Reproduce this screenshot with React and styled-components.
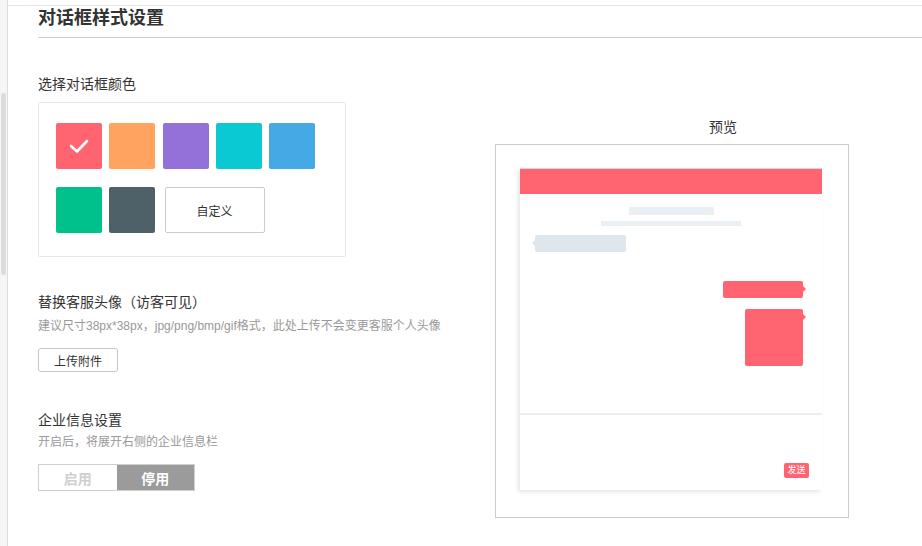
import styled, { createGlobalStyle } from 'styled-components'

const GlobalStyle = createGlobalStyle`
  html, body {
    margin: 0;
    padding: 0;
    background: #fff;
  }
  body {
    font-family: 'Liberation Sans', 'Noto Sans CJK SC', sans-serif;
    color: #333;
  }
`

const THEME_COLORS = ['#ff6470', '#ffa35f', '#9470d9', '#0bc9d3', '#44a9e5', '#00c18b', '#4f6168']

const Page = styled('div')`
  display: flex;
  width: 922px;
  height: 546px;
  overflow: hidden;
`

const Rail = styled('div')`
  flex: 0 0 7px;
  background: #f6f6f6;
  border-right: 1px solid #dcdcdc;
  padding-top: 93px;
`

const RailThumb = styled('div')`
  width: 5px;
  height: 182px;
  margin-left: 1px;
  border-radius: 2px;
  background: #dcdcdc;
`

const Main = styled('main')`
  flex: 1;
  margin-top: 5px;
  border-top: 1px solid #e4e4e4;
  padding-left: 30px;
`

const Title = styled('h1')`
  margin: 0;
  padding-bottom: 7px;
  border-bottom: 1px solid #cfcfcf;
  font-size: 18px;
  line-height: 24px;
  font-weight: 700;
  color: #333;
`

const Columns = styled('div')`
  display: flex;
`

const FormColumn = styled('div')`
  flex: 0 0 457px;
  display: flex;
  flex-direction: column;
  align-items: flex-start;
`

const Label = styled('div')`
  margin-top: ${({ $top }) => $top}px;
  font-size: 14px;
  line-height: 20px;
  color: #333;
`

const Hint = styled('div')`
  margin-top: ${({ $top }) => $top}px;
  font-size: 12px;
  line-height: 18px;
  color: #999;
`

const ColorPanel = styled('div')`
  box-sizing: border-box;
  width: 308px;
  height: 155px;
  margin-top: 8px;
  padding: 20px 0 0 17px;
  border: 1px solid #e4e9ec;
  border-radius: 2px;
`

const SwatchGrid = styled('div')`
  display: flex;
  flex-wrap: wrap;
  width: 265px;
  column-gap: 7.25px;
  row-gap: 18px;
`

const Swatch = styled('div')`
  width: 46px;
  height: 46px;
  border-radius: 2px;
  background: ${({ $color }) => $color};
  display: flex;
  align-items: center;
  justify-content: center;
`

const CustomButton = styled('button')`
  box-sizing: border-box;
  width: 100px;
  height: 46px;
  margin-left: 2px;
  border: 1px solid #ccc;
  border-radius: 2px;
  background: #fff;
  font-family: inherit;
  font-size: 12px;
  color: #333;
`

const UploadButton = styled('button')`
  box-sizing: border-box;
  width: 80px;
  height: 24px;
  margin-top: 13px;
  border: 1px solid #c8c8c8;
  border-radius: 3px;
  background: #fff;
  font-family: inherit;
  font-size: 12px;
  color: #333;
  padding: 0;
`

const Toggle = styled('div')`
  display: flex;
  margin-top: 13px;
  box-sizing: border-box;
  width: 157px;
  height: 27px;
  border: 1px solid #cfcfcf;
`

const ToggleOption = styled('div')`
  flex: 1;
  display: flex;
  align-items: center;
  justify-content: center;
  font-size: 14px;
  font-weight: 700;
  color: ${({ $active }) => ($active ? '#fff' : '#cfcfcf')};
  background: ${({ $active }) => ($active ? '#9b9b9b' : '#fff')};
`

const PreviewColumn = styled('div')`
  display: flex;
  flex-direction: column;
`

const PreviewLabel = styled('div')`
  margin-top: 79px;
  padding-left: 214px;
  font-size: 14px;
  line-height: 20px;
  color: #333;
`

const PreviewFrame = styled('div')`
  box-sizing: border-box;
  width: 354px;
  height: 374px;
  margin-top: 7px;
  padding: 23px 26px 27px 24px;
  border: 1px solid #cbcbcb;
`

const ChatWindow = styled('div')`
  height: 322px;
  display: flex;
  flex-direction: column;
  background: #fff;
  box-shadow: -2px 2px 4px rgba(0, 0, 0, 0.1);
`

const ChatHeader = styled('div')`
  height: 25px;
  background: #ff6470;
  border-top: 1px solid #c6dcec;
`

const ChatBody = styled('div')`
  flex: 1;
  display: flex;
  flex-direction: column;
  padding-top: 13px;
`

const Bar = styled('div')`
  align-self: center;
  width: ${({ $w }) => $w}px;
  height: ${({ $h }) => $h}px;
  margin-top: ${({ $top }) => $top || 0}px;
  background: #e9eff3;
`

const Bubble = styled('div')`
  position: relative;
  width: ${({ $w }) => $w}px;
  height: ${({ $h }) => $h}px;
  margin-top: ${({ $top }) => $top}px;
  border-radius: 2px;
  background: ${({ $mine }) => ($mine ? '#ff6470' : '#dee7ee')};
  align-self: ${({ $mine }) => ($mine ? 'flex-end' : 'flex-start')};
  margin-left: ${({ $mine }) => ($mine ? 0 : 15)}px;
  margin-right: ${({ $mine }) => ($mine ? 19 : 0)}px;

  &::after {
    content: '';
    position: absolute;
    top: 5px;
    ${({ $mine }) => ($mine ? 'right: -3px;' : 'left: -3px;')}
    border-top: 3px solid transparent;
    border-bottom: 3px solid transparent;
    ${({ $mine }) =>
      $mine ? 'border-left: 3px solid #ff6470;' : 'border-right: 3px solid #dee7ee;'}
  }
`

const InputArea = styled('div')`
  box-sizing: border-box;
  height: 77px;
  border-top: 2px solid #eeeeee;
  margin-left: -2px;
  display: flex;
  align-items: flex-end;
  justify-content: flex-end;
  padding: 0 13px 12px 0;
`

const SendButton = styled('div')`
  width: 25px;
  height: 15px;
  border-radius: 2px;
  background: #ff6470;
  color: #fff;
  font-size: 9px;
  line-height: 15px;
  text-align: center;
`

const Check = () => (
  <svg width="22" height="16" viewBox="0 0 22 16">
    <path d="M3 8 L9 13.5 L19 3" fill="none" stroke="#fff" strokeWidth="2.6" strokeLinecap="round" strokeLinejoin="round" />
  </svg>
)

const App = () => {
  return (
    <Page>
      <GlobalStyle />
      <Rail>
        <RailThumb />
      </Rail>
      <Main>
        <Title>对话框样式设置</Title>
        <Columns>
          <FormColumn>
            <Label $top={36}>选择对话框颜色</Label>
            <ColorPanel>
              <SwatchGrid>
                {THEME_COLORS.map((color, i) => (
                  <Swatch key={color} $color={color}>
                    {i === 0 && <Check />}
                  </Swatch>
                ))}
                <CustomButton>自定义</CustomButton>
              </SwatchGrid>
            </ColorPanel>

            <Label $top={35}>替换客服头像（访客可见）</Label>
            <Hint $top={5}>建议尺寸38px*38px，jpg/png/bmp/gif格式，此处上传不会变更客服个人头像</Hint>
            <UploadButton>上传附件</UploadButton>

            <Label $top={38}>企业信息设置</Label>
            <Hint $top={3}>开启后，将展开右侧的企业信息栏</Hint>
            <Toggle>
              <ToggleOption>启用</ToggleOption>
              <ToggleOption $active>停用</ToggleOption>
            </Toggle>
          </FormColumn>

          <PreviewColumn>
            <PreviewLabel>预览</PreviewLabel>
            <PreviewFrame>
              <ChatWindow>
                <ChatHeader />
                <ChatBody>
                  <Bar $w={85} $h={8} />
                  <Bar $w={140} $h={5} $top={6} />
                  <Bubble $w={91} $h={17} $top={9} />
                  <Bubble $mine $w={80} $h={17} $top={29} />
                  <Bubble $mine $w={58} $h={57} $top={11} />
                </ChatBody>
                <InputArea>
                  <SendButton>发送</SendButton>
                </InputArea>
              </ChatWindow>
            </PreviewFrame>
          </PreviewColumn>
        </Columns>
      </Main>
    </Page>
  )
}

export default App
